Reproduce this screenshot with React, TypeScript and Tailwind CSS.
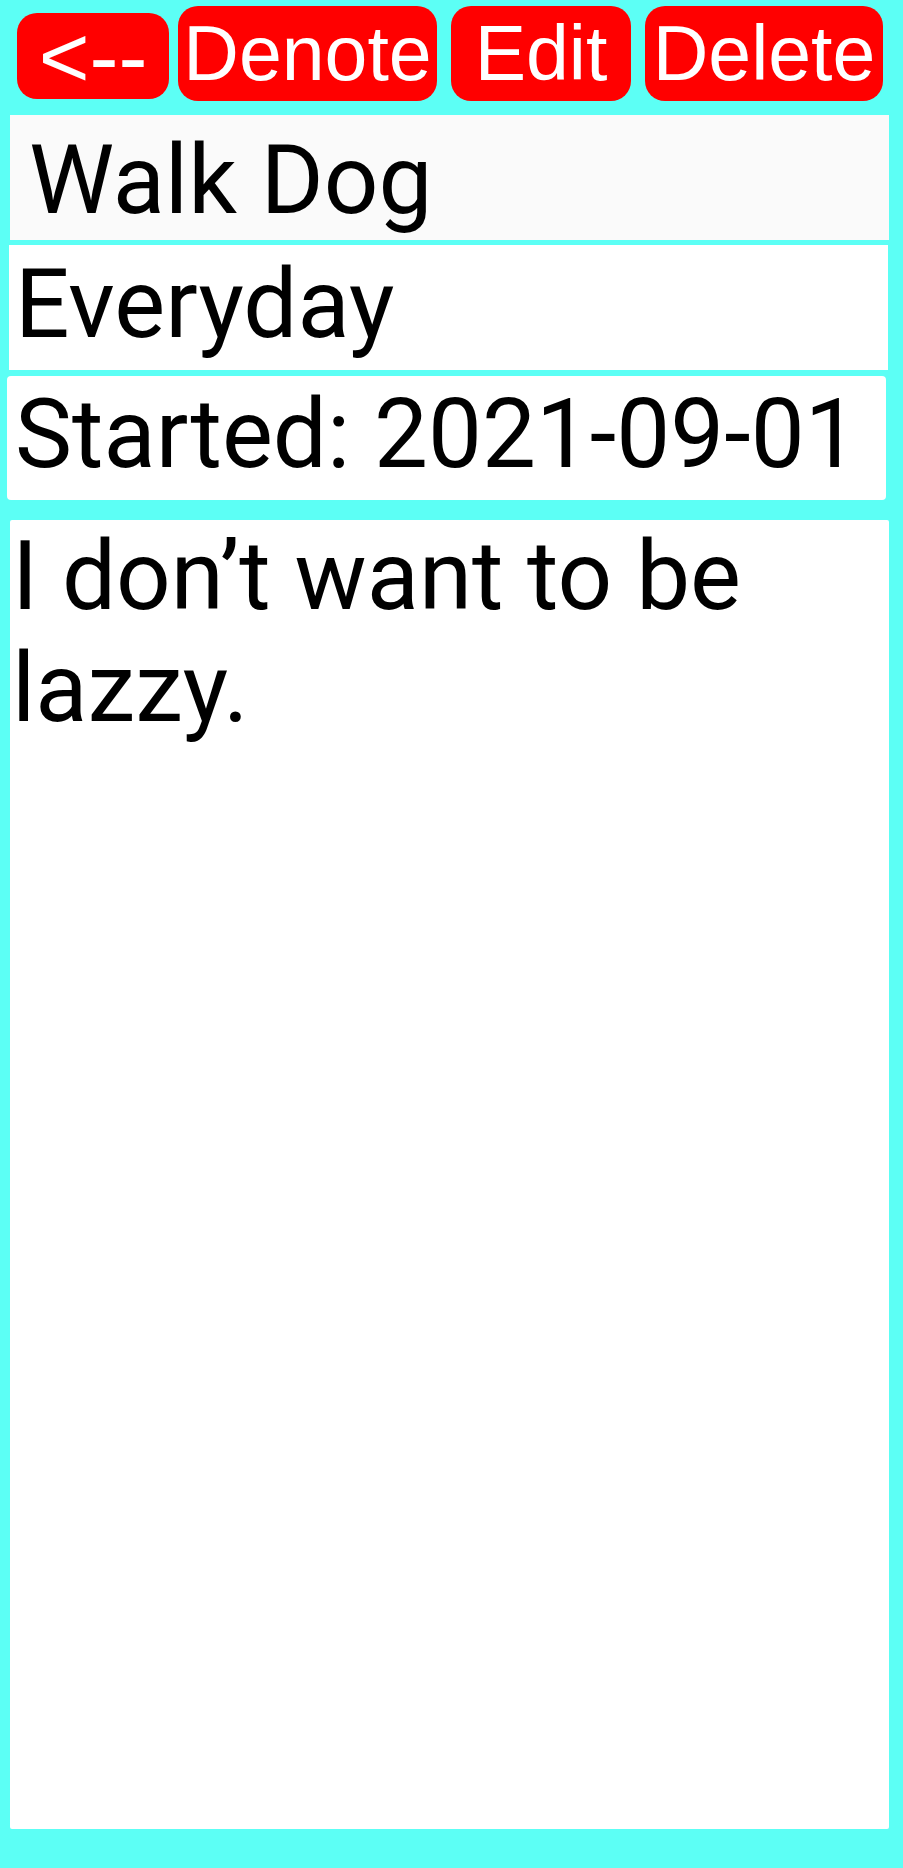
const buttons = [
  { label: "<--", className: "w-[152px] h-[86px] mt-[7px] text-[87px]" },
  { label: "Denote", className: "w-[259px] h-[95px] ml-[9px] text-[77px]" },
  { label: "Edit", className: "w-[180px] h-[95px] ml-[14px] text-[77px]" },
  { label: "Delete", className: "w-[238px] h-[95px] ml-[14px] text-[77px]" },
];

const roboto = { fontFamily: "Roboto, 'Noto Sans', sans-serif" };

export default function App() {
  return (
    <div className="min-h-[1868px] bg-[#5cfff5] flex flex-col">
      {/* top bar */}
      <div className="flex items-start pt-[6px] pl-[17px]">
        {buttons.map((b) => (
          <button
            key={b.label}
            className={`${b.className} bg-[#ff0000] text-white rounded-[20px] flex items-center justify-center whitespace-nowrap leading-none font-['Liberation_Sans',Arial,sans-serif]`}
          >
            {b.label}
          </button>
        ))}
      </div>

      {/* fields */}
      <div className="flex flex-col text-black text-[96px] leading-[normal]" style={roboto}>
        <div className="ml-[10px] mt-[14px] w-[879px] h-[125px] bg-[#fafafa] pl-[19px] pt-[9px] whitespace-nowrap overflow-hidden">
          Walk Dog
        </div>
        <div className="ml-[9px] mt-[5px] w-[879px] h-[125px] bg-white pl-[6px] pt-[3px] whitespace-nowrap overflow-hidden">
          Everyday
        </div>
        <div className="ml-[7px] mt-[6px] w-[879px] h-[124px] bg-white rounded-[4px] pl-[8px] pt-[2px] whitespace-nowrap overflow-hidden">
          Started: 2021-09-01
        </div>
        <div className="ml-[10px] mt-[20px] w-[879px] h-[1309px] bg-white rounded-[2px] pl-[2px]">
          I don’t want to be lazzy.
        </div>
      </div>
    </div>
  );
}
